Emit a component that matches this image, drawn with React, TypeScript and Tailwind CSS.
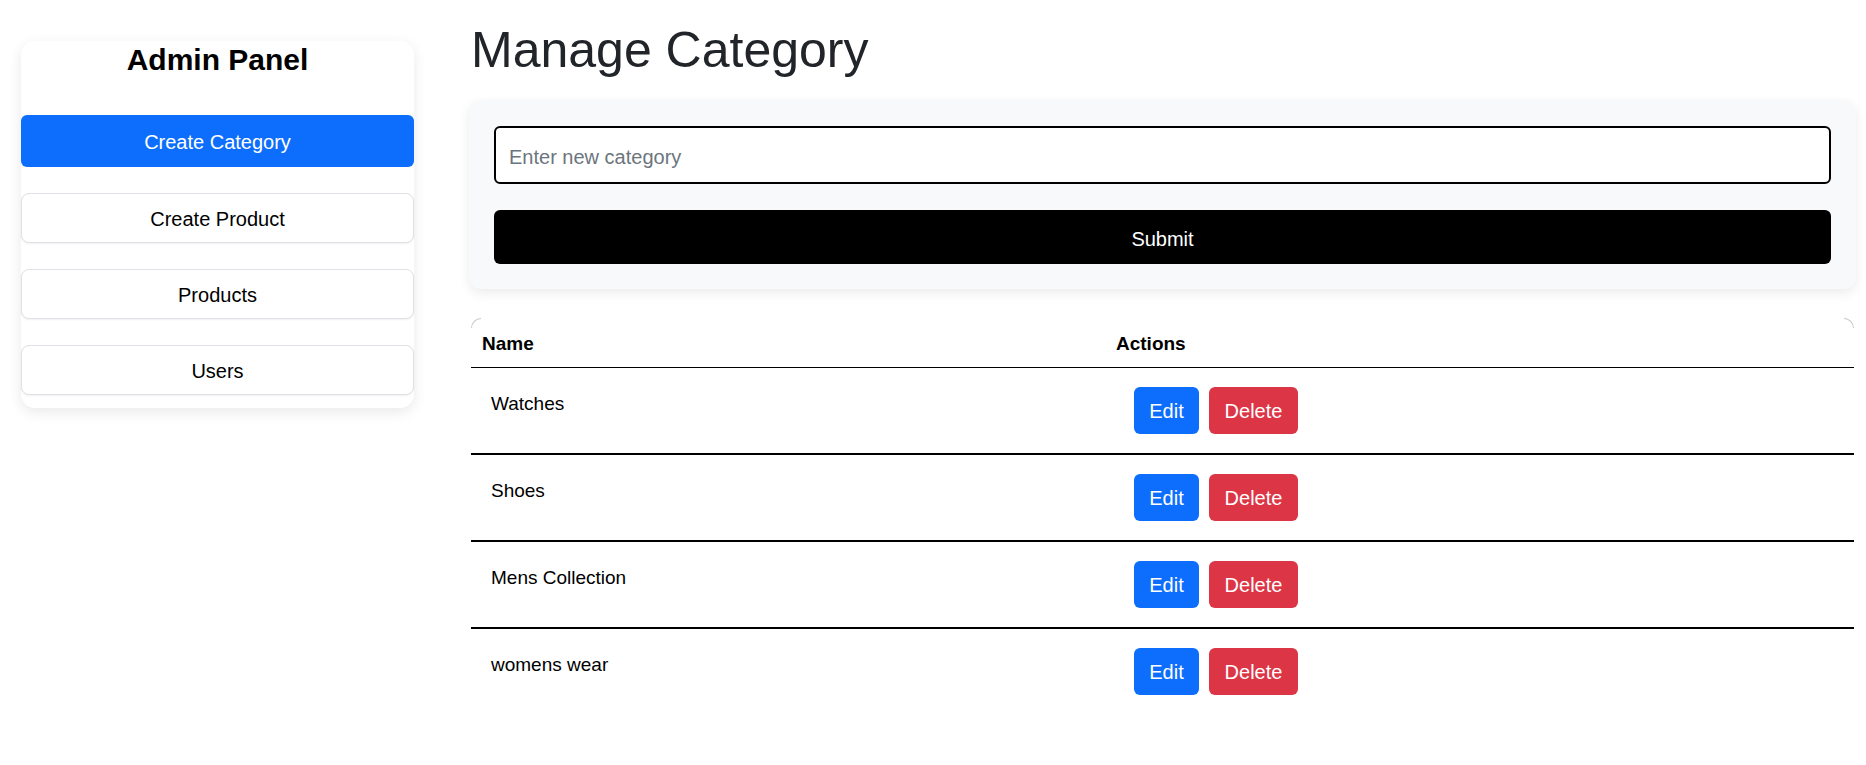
import React from "react";

const categories = ["Watches", "Shoes", "Mens Collection", "womens wear"];

function SideButton({ label, active }: { label: string; active?: boolean }) {
  if (active) {
    return (
      <button className="h-[52px] w-full rounded-[6px] bg-[#0d6efd] pt-[2px] text-[20px] text-white">
        {label}
      </button>
    );
  }
  return (
    <button className="h-[50px] w-full rounded-[8px] border border-[#dee2e6] bg-white pt-[2px] text-[20px] text-black shadow-[0_1px_2px_rgba(0,0,0,0.06)]">
      {label}
    </button>
  );
}

export default function App() {
  return (
    <div className="flex min-h-[765px] w-full bg-white pl-[21px] pr-[10px] font-['Liberation_Sans',Arial,sans-serif] text-black">
      <aside className="mt-[41px] w-[393px] self-start rounded-[14px] bg-white pb-[13px] shadow-[0_4px_14px_rgba(0,0,0,0.09)]">
        <h2 className="mt-px text-center text-[30px] font-bold leading-[36px]">Admin Panel</h2>
        <div className="mt-[37px] flex flex-col gap-[26px]">
          <SideButton label="Create Category" active />
          <SideButton label="Create Product" />
          <SideButton label="Products" />
          <SideButton label="Users" />
        </div>
      </aside>

      <main className="ml-[55px] flex-1">
        <h1 className="mt-[20px] pl-[2px] text-[50px] leading-[60px] text-[#212529]">Manage Category</h1>

        <div className="mt-[20px] flex flex-col gap-[26px] rounded-[12px] bg-[#f8f9fa] px-[25px] pb-[25px] pt-[26px] shadow-[0_4px_12px_rgba(0,0,0,0.08)]">
          <input
            type="text"
            placeholder="Enter new category"
            className="h-[58px] w-full rounded-[6px] border-2 border-black bg-white px-[13px] pt-[4px] text-[20px] text-black outline-none placeholder:text-[#6c757d]"
          />
          <button className="h-[54px] w-full rounded-[6px] bg-black pt-[4px] text-[20px] text-white">Submit</button>
        </div>

        <div className="relative mt-[29px] mr-[2px] ml-[2px]">
          <div className="absolute left-0 top-0 h-[10px] w-[10px] rounded-tl-[10px] border-l border-t border-[#c8c8c8]" />
          <div className="absolute right-0 top-0 h-[10px] w-[10px] rounded-tr-[10px] border-r border-t border-[#c8c8c8]" />
          <table className="w-full border-collapse text-left text-[19px]">
            <thead>
              <tr>
                <th className="w-[634px] border-b border-black pb-[9px] pl-[11px] pt-[12px] font-bold leading-[28px]">Name</th>
                <th className="border-b border-black pb-[9px] pl-[11px] pt-[12px] font-bold leading-[28px]">Actions</th>
              </tr>
            </thead>
            <tbody>
              {categories.map((c, i) => {
                const last = i === categories.length - 1;
                return (
                  <tr key={c}>
                    <td className={`pl-[20px] pt-[22px] align-top leading-[28px] ${last ? "" : "border-b-2 border-black"}`}>{c}</td>
                    <td className={`py-[19px] pl-[29px] ${last ? "" : "border-b-2 border-black"}`}>
                      <div className="flex gap-[10px]">
                        <button className="h-[47px] w-[65px] rounded-[6px] bg-[#0d6efd] pt-[1px] text-[20px] text-white">Edit</button>
                        <button className="h-[47px] w-[89px] rounded-[6px] bg-[#dc3545] pt-[1px] text-[20px] text-white">Delete</button>
                      </div>
                    </td>
                  </tr>
                );
              })}
            </tbody>
          </table>
        </div>
      </main>
    </div>
  );
}
